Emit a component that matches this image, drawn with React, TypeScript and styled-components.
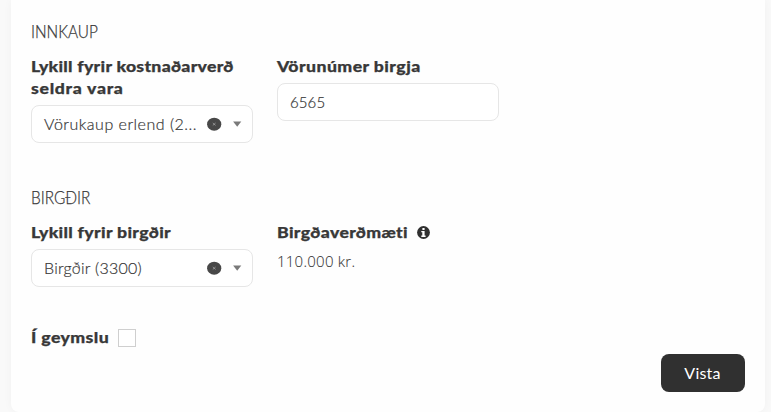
import React from "react";
import styled, { createGlobalStyle } from "styled-components";

const GlobalStyle = createGlobalStyle`
  * { box-sizing: border-box; }
  body { margin: 0; background: #f9f9f9; overflow: hidden; }
`;

const Page = styled.div`
  height: 412px;
  padding: 0 6px 0 11px;
  font-family: Lato, "Liberation Sans", sans-serif;
  color: #383838;
`;

const Card = styled.main`
  height: 412px;
  display: flex;
  flex-direction: column;
  padding: 20px 20px 0;
  background: #fefefe;
  border-radius: 0 0 8px 8px;
  box-shadow: 0 0 10px rgba(0, 0, 0, 0.035);
`;

const Section = styled.section<{ $height: number }>`
  height: ${(p) => p.$height}px;
`;

const Heading = styled.h2`
  margin: 0 0 14px;
  font-size: 17px;
  line-height: 22px;
  font-weight: 300;
  -webkit-text-stroke: 0.25px currentColor;
  transform: translateY(0.5px) scaleX(0.905);
  transform-origin: left;
`;

const Fields = styled.div`
  display: grid;
  grid-template-columns: 222px 222px;
  column-gap: 24px;
  align-items: start;
`;

const Label = styled.label<{ $gap?: number }>`
  display: flex;
  flex-wrap: wrap;
  align-items: center;
  column-gap: ${(p) => p.$gap ?? 0}px;
  margin-bottom: 5px;
`;

const LabelText = styled.span<{ $spacing: number }>`
  white-space: nowrap;
  font-size: 15.5px;
  line-height: 22px;
  font-weight: 900;
  -webkit-text-stroke: 0.25px currentColor;
  letter-spacing: ${(p) => p.$spacing}px;
  transform: translateY(-1px) scaleX(1.14);
  transform-origin: left;
`;

const Control = styled.div`
  display: flex;
  align-items: center;
  height: 38px;
  padding: 0 10px 0 12px;
  border: 1px solid #e6e6e6;
  border-radius: 8px;
  background: #fff;
`;

const Value = styled.span<{ $spacing: number; $size?: number }>`
  flex: 1;
  white-space: nowrap;
  font-size: ${(p) => p.$size ?? 16}px;
  line-height: 22px;
  font-weight: 300;
  -webkit-text-stroke: 0.2px currentColor;
  letter-spacing: ${(p) => p.$spacing}px;
`;

const Clear = styled.svg`
  flex: none;
  width: 15px;
  height: 14px;
  margin-right: 11px;
`;

const Caret = styled.svg`
  flex: none;
  width: 9px;
  height: 6px;
`;

const Amount = styled.div`
  font-family: "Open Sans", sans-serif;
  font-size: 15px;
  line-height: 22px;
  margin-top: 6px;
  font-weight: 300;
  letter-spacing: 0.25px;
  -webkit-text-stroke: 0.1px currentColor;
`;

const Info = styled.svg`
  width: 13px;
  height: 13px;
  margin-bottom: 1px;
`;

const CheckBox = styled.input`
  appearance: none;
  width: 18px;
  height: 18px;
  margin: 0;
  border: 1px solid #cfcfcf;
  background: #fff;
`;

const Footer = styled.footer`
  display: flex;
  justify-content: flex-end;
`;

const Save = styled.button`
  width: 84px;
  height: 38px;
  padding: 0 1px 1px 0;
  border: 0;
  border-radius: 8px;
  background: #303030;
  color: #fff;
  font: 400 16px/22px Lato, sans-serif;
  letter-spacing: 0.2px;
`;

function Select({ value, spacing }: { value: string; spacing: number }) {
  return (
    <Control>
      <Value $spacing={spacing}>{value}</Value>
      <Clear viewBox="0 0 15 14">
        <ellipse cx="7.2" cy="7.2" rx="7.1" ry="6.5" fill="#484848" />
        <path d="M5.8 6l2.8 2.4M8.6 6L5.8 8.4" stroke="#aaa" strokeWidth="0.7" />
      </Clear>
      <Caret viewBox="0 0 9 6">
        <path d="M0.1 0.5h8.2L4.2 5.7z" fill="#7a7a7a" />
      </Caret>
    </Control>
  );
}

export default function App() {
  return (
    <Page>
      <GlobalStyle />
      <Card>
        <Section $height={166}>
          <Heading>INNKAUP</Heading>
          <Fields>
            <div>
              <Label>
                <LabelText $spacing={0.23}>Lykill fyrir kostnaðarverð</LabelText>
                <LabelText $spacing={0.6}>seldra vara</LabelText>
              </Label>
              <Select value="Vörukaup erlend (2..." spacing={0.5} />
            </div>
            <div>
              <Label>
                <LabelText $spacing={0.36}>Vörunúmer birgja</LabelText>
              </Label>
              <Control>
                <Value $spacing={0.1} $size={15}>6565</Value>
              </Control>
            </div>
          </Fields>
        </Section>
        <Section $height={141}>
          <Heading>BIRGÐIR</Heading>
          <Fields>
            <div>
              <Label>
                <LabelText $spacing={0.27}>Lykill fyrir birgðir</LabelText>
              </Label>
              <Select value="Birgðir (3300)" spacing={0.25} />
            </div>
            <div>
              <Label $gap={25}>
                <LabelText $spacing={0.3}>Birgðaverðmæti</LabelText>
                <Info viewBox="0 0 13 13">
                  <circle cx="6.5" cy="6.5" r="6.4" fill="#303030" />
                  <path d="M5.4 1.9h2.2v2H5.4zM4.3 5h3.3v4.6h1v1.3H4.3V9.6h1V6.3h-1z" fill="#fff" />
                </Info>
              </Label>
              <Amount>110.000 kr.</Amount>
            </div>
          </Fields>
        </Section>
        <Label $gap={18.5}>
          <LabelText $spacing={0.34}>Í geymslu</LabelText>
          <CheckBox type="checkbox" aria-label="Í geymslu" />
        </Label>
        <Footer>
          <Save>Vista</Save>
        </Footer>
      </Card>
    </Page>
  );
}
